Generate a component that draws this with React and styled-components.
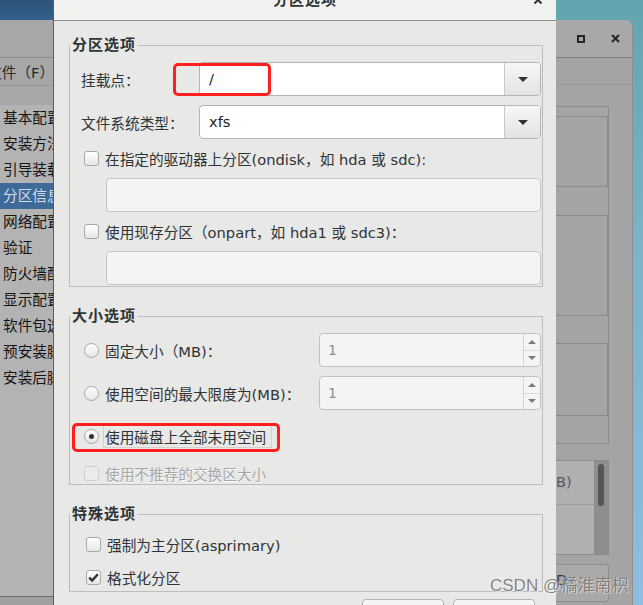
import React from 'react';
import styled, { createGlobalStyle } from 'styled-components';

const UI_FONT = `"DejaVu Sans", "Noto Sans CJK SC", sans-serif`;

const GlobalStyle = createGlobalStyle`
  html, body {
    margin: 0;
    padding: 0;
    background: #8dbbde;
  }
  body {
    font-family: ${UI_FONT};
  }
`;

const Desktop = styled.div`
  position: relative;
  display: flex;
  width: 643px;
  height: 605px;
  overflow: hidden;
  background: linear-gradient(180deg, #62a5ae 0%, #7db2c8 40%, #8fbde0 100%);
  font-family: ${UI_FONT};
`;

/* ---- parent window on the left (dimmed) ---- */

const ParentWindow = styled.div`
  width: 53px;
  flex: none;
  display: flex;
  flex-direction: column;
  background: #a7a7a7;
  overflow: hidden;
  white-space: nowrap;
  font-size: 14.67px;
  color: #141414;
`;

const ParentTitle = styled.div`
  height: 20px;
  flex: none;
  background: linear-gradient(180deg, #2a5478, #33618a);
`;

const ParentToolbar = styled.div`
  height: 37px;
  flex: none;
  border-bottom: 1px solid #8c8c8c;
`;

const ParentMenu = styled.div`
  height: 27px;
  flex: none;
  display: flex;
  align-items: center;
  border-bottom: 1px solid #969696;
  color: #2a2a2a;
  span {
    margin-left: -13px;
  }
`;

const ParentSpacer = styled.div`
  height: 19px;
  flex: none;
`;

const NavList = styled.div`
  flex: 1;
  background: #b3b3b3;
  border-bottom: 1px solid #6c6c6c;
`;

const NavItem = styled.div`
  height: 26px;
  line-height: 26px;
  padding-left: 3px;
  background: ${p => (p.$selected ? '#3d6a99' : 'transparent')};
  color: ${p => (p.$selected ? '#d2dbe6' : '#141414')};
`;

const ParentFooter = styled.div`
  height: 8px;
  flex: none;
  background: #a0a0a0;
`;

/* ---- the dialog ---- */

const Dialog = styled.div`
  width: 503px;
  flex: none;
  box-sizing: border-box;
  border-left: 1px solid #5c5c5c;
  background: #e8e8e7;
  display: flex;
  flex-direction: column;
  color: #2e3436;
  font-size: 14.67px;
  overflow: hidden;
`;

const DialogTitleBar = styled.div`
  height: 20px;
  flex: none;
  background: #f2f2f1;
  border-bottom: 1px solid #8e8e8e;
  display: grid;
  grid-template-columns: 1fr auto 1fr;
  align-items: start;
  overflow: hidden;
`;

const DialogTitle = styled.div`
  grid-column: 2;
  margin-top: -10px;
  font-size: 15px;
  font-weight: bold;
  line-height: 20px;
  letter-spacing: 1px;
  color: #2e3436;
`;

const CloseGlyph = styled.svg`
  grid-column: 3;
  justify-self: end;
  margin: -5px 13px 0 0;
`;

const DialogBody = styled.div`
  display: flex;
  flex-direction: column;
  padding: 0 13px 0 15px;
`;

const Frame = styled.fieldset`
  margin: ${p => p.$top}px 0 0 0;
  padding: 0;
  min-width: 0;
  border: 1px solid #bdbdbb;
`;

const FrameLegend = styled.legend`
  padding: 0 2px;
  font-size: 15px;
  font-weight: bold;
  line-height: 16px;
  letter-spacing: 1px;
  color: #2e3436;
`;

const FrameContent = styled.div`
  display: flex;
  flex-direction: column;
  gap: 9px;
  padding: ${p => p.$pad};
`;

const FormRow = styled.div`
  position: relative;
  display: flex;
  align-items: center;
  height: ${p => p.$h}px;
  padding-left: ${p => p.$indent || 0}px;
  white-space: nowrap;
`;

const FieldLabel = styled.div`
  width: ${p => p.$w}px;
  flex: none;
`;

const Combo = styled.div`
  flex: 1;
  height: 34px;
  box-sizing: border-box;
  display: flex;
  border: 1px solid #b4b4b2;
  border-radius: 4px;
  background: #ffffff;
  overflow: hidden;
`;

const ComboText = styled.div`
  flex: 1;
  padding-left: 9px;
  line-height: 32px;
  color: #1f2324;
`;

const ComboButton = styled.div`
  width: 35px;
  border-left: 1px solid #c8c8c6;
  background: linear-gradient(180deg, #f7f7f6, #e3e3e1);
  display: flex;
  align-items: center;
  justify-content: center;
`;

const DownArrow = styled.span`
  width: 0;
  height: 0;
  border-left: 5px solid transparent;
  border-right: 5px solid transparent;
  border-top: 5px solid #2e3436;
`;

const Entry = styled.div`
  height: 34px;
  flex: none;
  box-sizing: border-box;
  margin-left: 25px;
  border: 1px solid #c6c6c4;
  border-radius: 4px;
  background: #f4f4f3;
`;

const SpinBox = styled.div`
  margin-left: auto;
  width: 222px;
  height: 34px;
  box-sizing: border-box;
  display: flex;
  border: 1px solid #c2c2c0;
  border-radius: 4px;
  background: #f4f4f3;
  overflow: hidden;
`;

const SpinValue = styled.div`
  flex: 1;
  padding-left: 8px;
  line-height: 32px;
  font-family: "DejaVu Sans Mono", monospace;
  font-size: 14px;
  color: #8e8e8c;
`;

const SpinButtons = styled.div`
  width: 16px;
  border-left: 1px solid #d4d4d2;
  display: flex;
  flex-direction: column;
`;

const SpinHalf = styled.div`
  flex: 1;
  display: flex;
  align-items: center;
  justify-content: center;
  & + & {
    border-top: 1px solid #dadad8;
  }
`;

const SpinArrow = styled.span`
  width: 0;
  height: 0;
  border-left: 4.5px solid transparent;
  border-right: 4.5px solid transparent;
  ${p => (p.$up ? 'border-bottom' : 'border-top')}: 4px solid #7a7a7a;
`;

const CheckBox = styled.span`
  width: 15px;
  height: 15px;
  flex: none;
  box-sizing: border-box;
  margin-right: 6px;
  display: inline-flex;
  align-items: center;
  justify-content: center;
  border: 1px solid ${p => (p.$disabled ? '#cfcfcd' : '#a8a8a6')};
  border-radius: 3px;
  background: ${p => (p.$disabled ? '#ebebea' : 'linear-gradient(180deg, #ffffff, #e6e6e4)')};
`;

const Radio = styled.span`
  width: 15px;
  height: 15px;
  flex: none;
  box-sizing: border-box;
  margin-right: ${p => (p.$gap != null ? p.$gap : 6)}px;
  display: inline-flex;
  align-items: center;
  justify-content: center;
  border: 1px solid #a8a8a6;
  border-radius: 50%;
  background: linear-gradient(180deg, #ffffff, #e6e6e4);
  &::after {
    content: '';
    display: ${p => (p.$checked ? 'block' : 'none')};
    width: 5px;
    height: 5px;
    border-radius: 50%;
    background: #2e3436;
  }
`;

const OptionText = styled.span`
  color: ${p => (p.$disabled ? '#a6a6a4' : '#2e3436')};
  text-shadow: ${p => (p.$disabled ? '0 1px #ffffff' : 'none')};
`;

const FocusLabel = styled.span`
  display: inline-flex;
  align-items: center;
  height: 21px;
  padding: 0 5px 0 1px;
  border: 1px solid #d0d0ce;
`;

const Highlight = styled.div`
  position: absolute;
  left: ${p => p.$x}px;
  top: ${p => p.$y}px;
  width: ${p => p.$w}px;
  height: ${p => p.$h}px;
  box-sizing: border-box;
  border: 3px solid #ff1f1f;
  border-radius: 5px;
  pointer-events: none;
`;

const ButtonBar = styled.div`
  display: flex;
  justify-content: flex-end;
  gap: 9px;
  margin-top: 7px;
  padding-right: 8px;
`;

const DialogButton = styled.div`
  width: 82px;
  height: 34px;
  box-sizing: border-box;
  border: 1px solid #b4b4b2;
  border-radius: 4px;
  background: linear-gradient(180deg, #f6f6f5, #e6e6e4);
`;

/* ---- parent window on the right (dimmed) ---- */

const BackWindow = styled.div`
  width: 77px;
  flex: none;
  margin-top: 20px;
  box-sizing: border-box;
  display: flex;
  flex-direction: column;
  background: #a4a4a4;
  border-right: 1px solid #8f8f8f;
  border-top-right-radius: 7px;
  overflow: hidden;
`;

const BackTitle = styled.div`
  height: 37px;
  flex: none;
  display: flex;
  align-items: center;
  gap: 26px;
  padding-left: 21px;
  background: #a8a8a8;
  border-bottom: 1px solid #7b7b7b;
`;

const BackMenu = styled.div`
  height: 26px;
  flex: none;
  border-bottom: 1px solid #979797;
`;

const BackBody = styled.div`
  flex: 1;
  display: flex;
  flex-direction: column;
  padding: 21px 23px 0 0;
`;

const PaneStack = styled.div`
  border-top: 1px solid #8b8b8b;
  border-right: 1px solid #8b8b8b;
  padding: 9px 0 0 0;
`;

const Pane = styled.div`
  height: ${p => p.$h}px;
  box-sizing: border-box;
  border-top: ${p => (p.$first ? '1px solid #8b8b8b' : 'none')};
  border-bottom: 1px solid #8b8b8b;
  border-right: ${p => (p.$boxed ? '1px solid #8b8b8b' : 'none')};
`;

const ListArea = styled.div`
  height: 93px;
  margin-top: 16px;
  display: flex;
  border-right: 1px solid #8b8b8b;
  border-bottom: 1px solid #8b8b8b;
  border-top: 1px solid #8b8b8b;
`;

const ListRows = styled.div`
  flex: 1;
  background: #b0b0b0;
`;

const ListRow = styled.div`
  height: 44px;
  box-sizing: border-box;
  border-bottom: 1px solid #9c9c9c;
  line-height: 42px;
  font-size: 14.67px;
  color: #585858;
  overflow: hidden;
`;

const Scrollbar = styled.div`
  width: 14px;
  background: #8e8e8e;
  display: flex;
  justify-content: center;
  padding-top: 3px;
  box-sizing: border-box;
`;

const ScrollThumb = styled.div`
  width: 6px;
  height: 42px;
  border-radius: 3px;
  background: #565656;
`;

const BackButton = styled.div`
  height: 38px;
  margin-top: 9px;
  box-sizing: border-box;
  border: 1px solid #8d8d8d;
  border-left: none;
  border-radius: 0 4px 4px 0;
  background: #a9a9a9;
  font-size: 14.67px;
  line-height: 30px;
  color: #3a3a3a;
  overflow: hidden;
`;

const Watermark = styled.div`
  position: absolute;
  left: 490px;
  top: 576px;
  font-family: "Liberation Sans", "Noto Sans CJK SC", sans-serif;
  font-size: 17px;
  line-height: 20px;
  color: rgba(118, 118, 118, 0.9);
  text-shadow: 1px 1px 0 rgba(255, 255, 255, 0.55), -1px 0 0 rgba(255, 255, 255, 0.35);
  white-space: nowrap;
  pointer-events: none;
`;

const navItems = [
  '基本配置', '安装方法', '引导装载程序选项', '分区信息', '网络配置', '验证',
  '防火墙配置', '显示配置', '软件包选择', '预安装脚本', '安装后脚本',
];

function CheckMark() {
  return (
    <svg width="13" height="13" viewBox="0 0 13 13">
      <path d="M2.2 6.6 L5.2 9.6 L10.8 3.2" fill="none" stroke="#2e3436" strokeWidth="2.4" />
    </svg>
  );
}

function Spin() {
  return (
    <SpinBox>
      <SpinValue>1</SpinValue>
      <SpinButtons>
        <SpinHalf><SpinArrow $up /></SpinHalf>
        <SpinHalf><SpinArrow /></SpinHalf>
      </SpinButtons>
    </SpinBox>
  );
}

export default function App() {
  return (
    <Desktop>
      <GlobalStyle />

      <ParentWindow>
        <ParentTitle />
        <ParentToolbar />
        <ParentMenu><span>文件（F）</span></ParentMenu>
        <ParentSpacer />
        <NavList>
          {navItems.map(item => (
            <NavItem key={item} $selected={item === '分区信息'}>{item}</NavItem>
          ))}
        </NavList>
        <ParentFooter />
      </ParentWindow>

      <Dialog>
        <DialogTitleBar>
          <DialogTitle>分区选项</DialogTitle>
          <CloseGlyph width="10" height="10" viewBox="0 0 10 10">
            <path d="M1.5 1.5 L8.5 8.5 M8.5 1.5 L1.5 8.5" stroke="#2e3436" strokeWidth="2" />
          </CloseGlyph>
        </DialogTitleBar>

        <DialogBody>
          <Frame $top={16}>
            <FrameLegend>分区选项</FrameLegend>
            <FrameContent $pad="9px 1px 1px 11px">
              <FormRow $h={34}>
                <FieldLabel $w={118}>挂载点：</FieldLabel>
                <Combo>
                  <ComboText>/</ComboText>
                  <ComboButton><DownArrow /></ComboButton>
                </Combo>
                <Highlight $x={92} $y={1} $w={98} $h={33} />
              </FormRow>
              <FormRow $h={34}>
                <FieldLabel $w={118}>文件系统类型：</FieldLabel>
                <Combo>
                  <ComboText>xfs</ComboText>
                  <ComboButton><DownArrow /></ComboButton>
                </Combo>
              </FormRow>
              <FormRow $h={21} $indent={3}>
                <CheckBox />
                <OptionText>在指定的驱动器上分区(ondisk，如 hda 或 sdc):</OptionText>
              </FormRow>
              <Entry />
              <FormRow $h={21} $indent={3}>
                <CheckBox />
                <OptionText>使用现存分区（onpart，如 hda1 或 sdc3)：</OptionText>
              </FormRow>
              <Entry />
            </FrameContent>
          </Frame>

          <Frame $top={21}>
            <FrameLegend>大小选项</FrameLegend>
            <FrameContent $pad="9px 1px 0 11px">
              <FormRow $h={34} $indent={3}>
                <Radio />
                <OptionText>固定大小（MB)：</OptionText>
                <Spin />
              </FormRow>
              <FormRow $h={34} $indent={3}>
                <Radio />
                <OptionText>使用空间的最大限度为(MB)：</OptionText>
                <Spin />
              </FormRow>
              <FormRow $h={34} $indent={3}>
                <Radio $checked $gap={4} />
                <FocusLabel>使用磁盘上全部未用空间</FocusLabel>
                <Highlight $x={-9} $y={4} $w={208} $h={29} />
              </FormRow>
              <FormRow $h={22} $indent={3}>
                <CheckBox $disabled />
                <OptionText $disabled>使用不推荐的交换区大小</OptionText>
              </FormRow>
            </FrameContent>
          </Frame>

          <Frame $top={21}>
            <FrameLegend>特殊选项</FrameLegend>
            <FrameContent $pad="10px 1px 2px 11px">
              <FormRow $h={24} $indent={5}>
                <CheckBox />
                <OptionText>强制为主分区(asprimary)</OptionText>
              </FormRow>
              <FormRow $h={24} $indent={5}>
                <CheckBox><CheckMark /></CheckBox>
                <OptionText>格式化分区</OptionText>
              </FormRow>
            </FrameContent>
          </Frame>

          <ButtonBar>
            <DialogButton />
            <DialogButton />
          </ButtonBar>
        </DialogBody>
      </Dialog>

      <BackWindow>
        <BackTitle>
          <svg width="8" height="8" viewBox="0 0 8 8">
            <rect x="1" y="1" width="6" height="6" fill="none" stroke="#262626" strokeWidth="2" />
          </svg>
          <svg width="9" height="9" viewBox="0 0 9 9">
            <path d="M1 1 L8 8 M8 1 L1 8" stroke="#262626" strokeWidth="2" />
          </svg>
        </BackTitle>
        <BackMenu />
        <BackBody>
          <PaneStack>
            <Pane $h={71} $first $boxed />
            <Pane $h={29} />
            <Pane $h={100} $boxed />
            <Pane $h={28} />
            <Pane $h={72} $boxed />
            <Pane $h={28} />
          </PaneStack>
          <ListArea>
            <ListRows>
              <ListRow>B)</ListRow>
            </ListRows>
            <Scrollbar><ScrollThumb /></Scrollbar>
          </ListArea>
          <BackButton>D</BackButton>
        </BackBody>
      </BackWindow>

      <Watermark>CSDN @橘淮南枳</Watermark>
    </Desktop>
  );
}
